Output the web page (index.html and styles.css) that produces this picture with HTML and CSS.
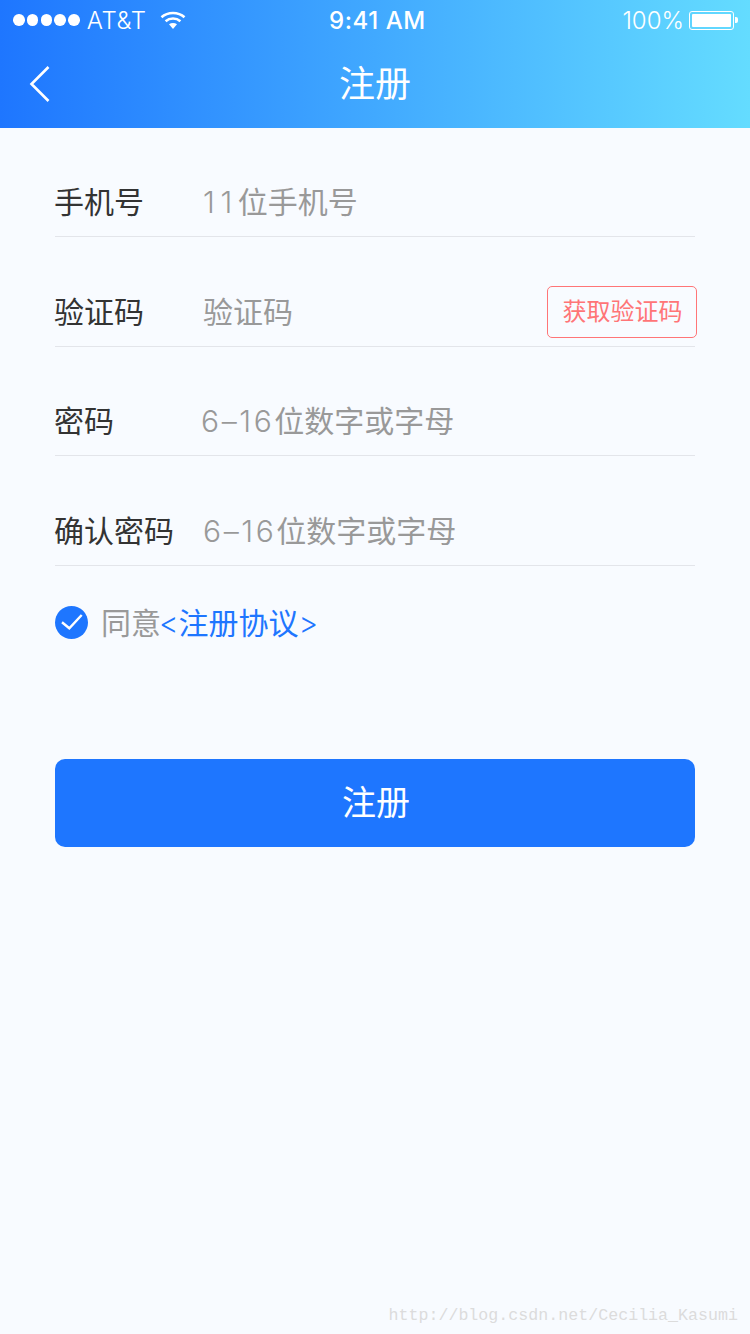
FILE: index.html
```html
<!DOCTYPE html>
<html lang="zh-CN">
<head>
  <meta charset="UTF-8">
  <meta name="viewport" content="width=device-width, initial-scale=1.0">
  <title>注册</title>
  <link rel="stylesheet" href="styles.css">
</head>
<body>

<header class="top">
  <div class="status">
    <div class="status-left">
      <span class="dots"><i></i><i></i><i></i><i></i><i></i></span>
      <span class="carrier">AT&amp;T</span>
      <svg class="wifi" width="26" height="20" viewBox="0 0 26 20">
        <path d="M1.5 7.2C7.8 1.6 18.2 1.6 24.5 7.2" fill="none" stroke="#fff" stroke-width="2.6"/>
        <path d="M5.6 11.2C9.8 7.6 16.2 7.6 20.4 11.2" fill="none" stroke="#fff" stroke-width="2.6"/>
        <path d="M9 14.2C11.4 12.6 14.6 12.6 17 14.2L13 19Z" fill="#fff"/>
      </svg>
    </div>
    <span class="time">9:41 AM</span>
    <div class="status-right">
      <span class="percent">100%</span>
      <span class="battery"><b></b></span>
      <span class="battery-tip"></span>
    </div>
  </div>
  <div class="nav">
    <svg class="back" width="22" height="38" viewBox="0 0 22 38">
      <path d="M19.5 2L2.5 19L19.5 36" fill="none" stroke="#fff" stroke-width="2.6"/>
    </svg>
    <h1>注册</h1>
  </div>
</header>

<main class="form">
  <div class="row">
    <label>手机号</label>
    <span class="hint"><span class="num num-wide">11</span>位手机号</span>
  </div>
  <div class="row">
    <label>验证码</label>
    <span class="hint">验证码</span>
    <a class="code-btn">获取验证码</a>
  </div>
  <div class="row">
    <label>密码</label>
    <span class="hint hint-tight"><span class="num">6–16</span>位数字或字母</span>
  </div>
  <div class="row">
    <label>确认密码</label>
    <span class="hint"><span class="num">6–16</span>位数字或字母</span>
  </div>

  <div class="agree">
    <svg width="33" height="33" viewBox="0 0 33 33">
      <circle cx="16.5" cy="16.5" r="16.5" fill="#1e76ff"/>
      <path d="M7 16.3L14.3 22.3L26.7 9" fill="none" stroke="#fff" stroke-width="2.4"/>
    </svg>
    <span class="agree-text">同意<a><span class="bracket">&lt;</span>注册协议<span class="bracket">&gt;</span></a></span>
  </div>

  <button class="submit">注册</button>
</main>

<div class="watermark">http://blog.csdn.net/Cecilia_Kasumi</div>

</body>
</html>
```

FILE: styles.css
```css
body {
  margin: 0;
  width: 750px;
  height: 1334px;
  overflow: hidden;
  position: relative;
  background: #f8fbff;
  font-family: "Inter", "Noto Sans CJK SC", sans-serif;
}

.top {
  height: 128px;
  background: linear-gradient(to right, #1e76ff, #64dcff);
  color: white;
}

.status {
  height: 40px;
  padding: 0 12px 0 13px;
  display: flex;
  align-items: center;
  justify-content: space-between;
  font-size: 24px;
  position: relative;
}

.status-left, .status-right {
  display: flex;
  align-items: center;
}

.dots {
  display: flex;
  gap: 2.2px;
}

.dots i {
  width: 11.6px;
  height: 11.6px;
  border-radius: 50%;
  background: white;
}

.carrier {
  margin-left: 7px;
  font-weight: 300;
  letter-spacing: 0.6px;
}

.wifi {
  margin-left: 13px;
}

.time {
  font-weight: 500;
  letter-spacing: 0.55px;
  position: absolute;
  left: 329px;
}

.percent {
  font-weight: 300;
}

.battery {
  width: 45px;
  height: 19px;
  margin-left: 5px;
  padding: 2px;
  box-sizing: border-box;
  border: 1px solid white;
  border-radius: 3px;
  display: flex;
}

.battery b {
  flex: 1;
  background: white;
  border-radius: 1px;
}

.battery-tip {
  width: 3px;
  height: 6px;
  margin-left: 1px;
  background: white;
  border-radius: 0 2px 2px 0;
}

.nav {
  height: 88px;
  display: flex;
  align-items: center;
  justify-content: center;
  position: relative;
}

.nav h1 {
  margin: 0 0 6px;
  font-size: 36px;
  font-weight: 400;
}

.back {
  position: absolute;
  left: 29px;
  top: 25px;
}

.form {
  padding: 0 55px;
}

.row {
  height: 109.4px;
  box-sizing: border-box;
  display: flex;
  align-items: center;
  padding-top: 36.4px;
  border-bottom: 1px solid #e3e5ea;
  font-size: 30px;
}

.row label {
  width: 149px;
  margin-left: -1px;
  color: #333;
}

.hint {
  color: #999;
  flex: 1;
}

.hint-tight {
  margin-left: -2px;
}

/* digits are lighter and wider than the CJK around them */
.num {
  font-weight: 300;
  letter-spacing: 2.6px;
}

.num-wide {
  letter-spacing: 5.6px;
}

.code-btn {
  width: 150px;
  height: 52px;
  box-sizing: border-box;
  margin-right: -2px;
  margin-top: 4px;
  border: 1px solid #ff7577;
  border-radius: 5px;
  color: #ff7577;
  font-size: 24px;
  text-align: center;
  text-indent: 1px;
  line-height: 50px;
}

.agree {
  margin-top: 37px;
  display: flex;
  align-items: center;
  gap: 13px;
  font-size: 30px;
}

.agree-text {
  color: #999;
  margin-top: -4px;
}

.agree-text a {
  color: #1e76ff;
  margin-left: -2px;
}

.bracket {
  font-weight: 300;
}

.submit {
  display: block;
  width: 100%;
  height: 88px;
  margin-top: 116px;
  padding: 0 0 4px 2px;
  border: 0;
  border-radius: 10px;
  background: #1e76ff;
  color: white;
  font-family: inherit;
  font-size: 34px;
}

.watermark {
  position: absolute;
  right: 12px;
  bottom: 9px;
  font-family: "Liberation Mono", monospace;
  font-size: 16.65px;
  color: #dcdcdc;
}
```
